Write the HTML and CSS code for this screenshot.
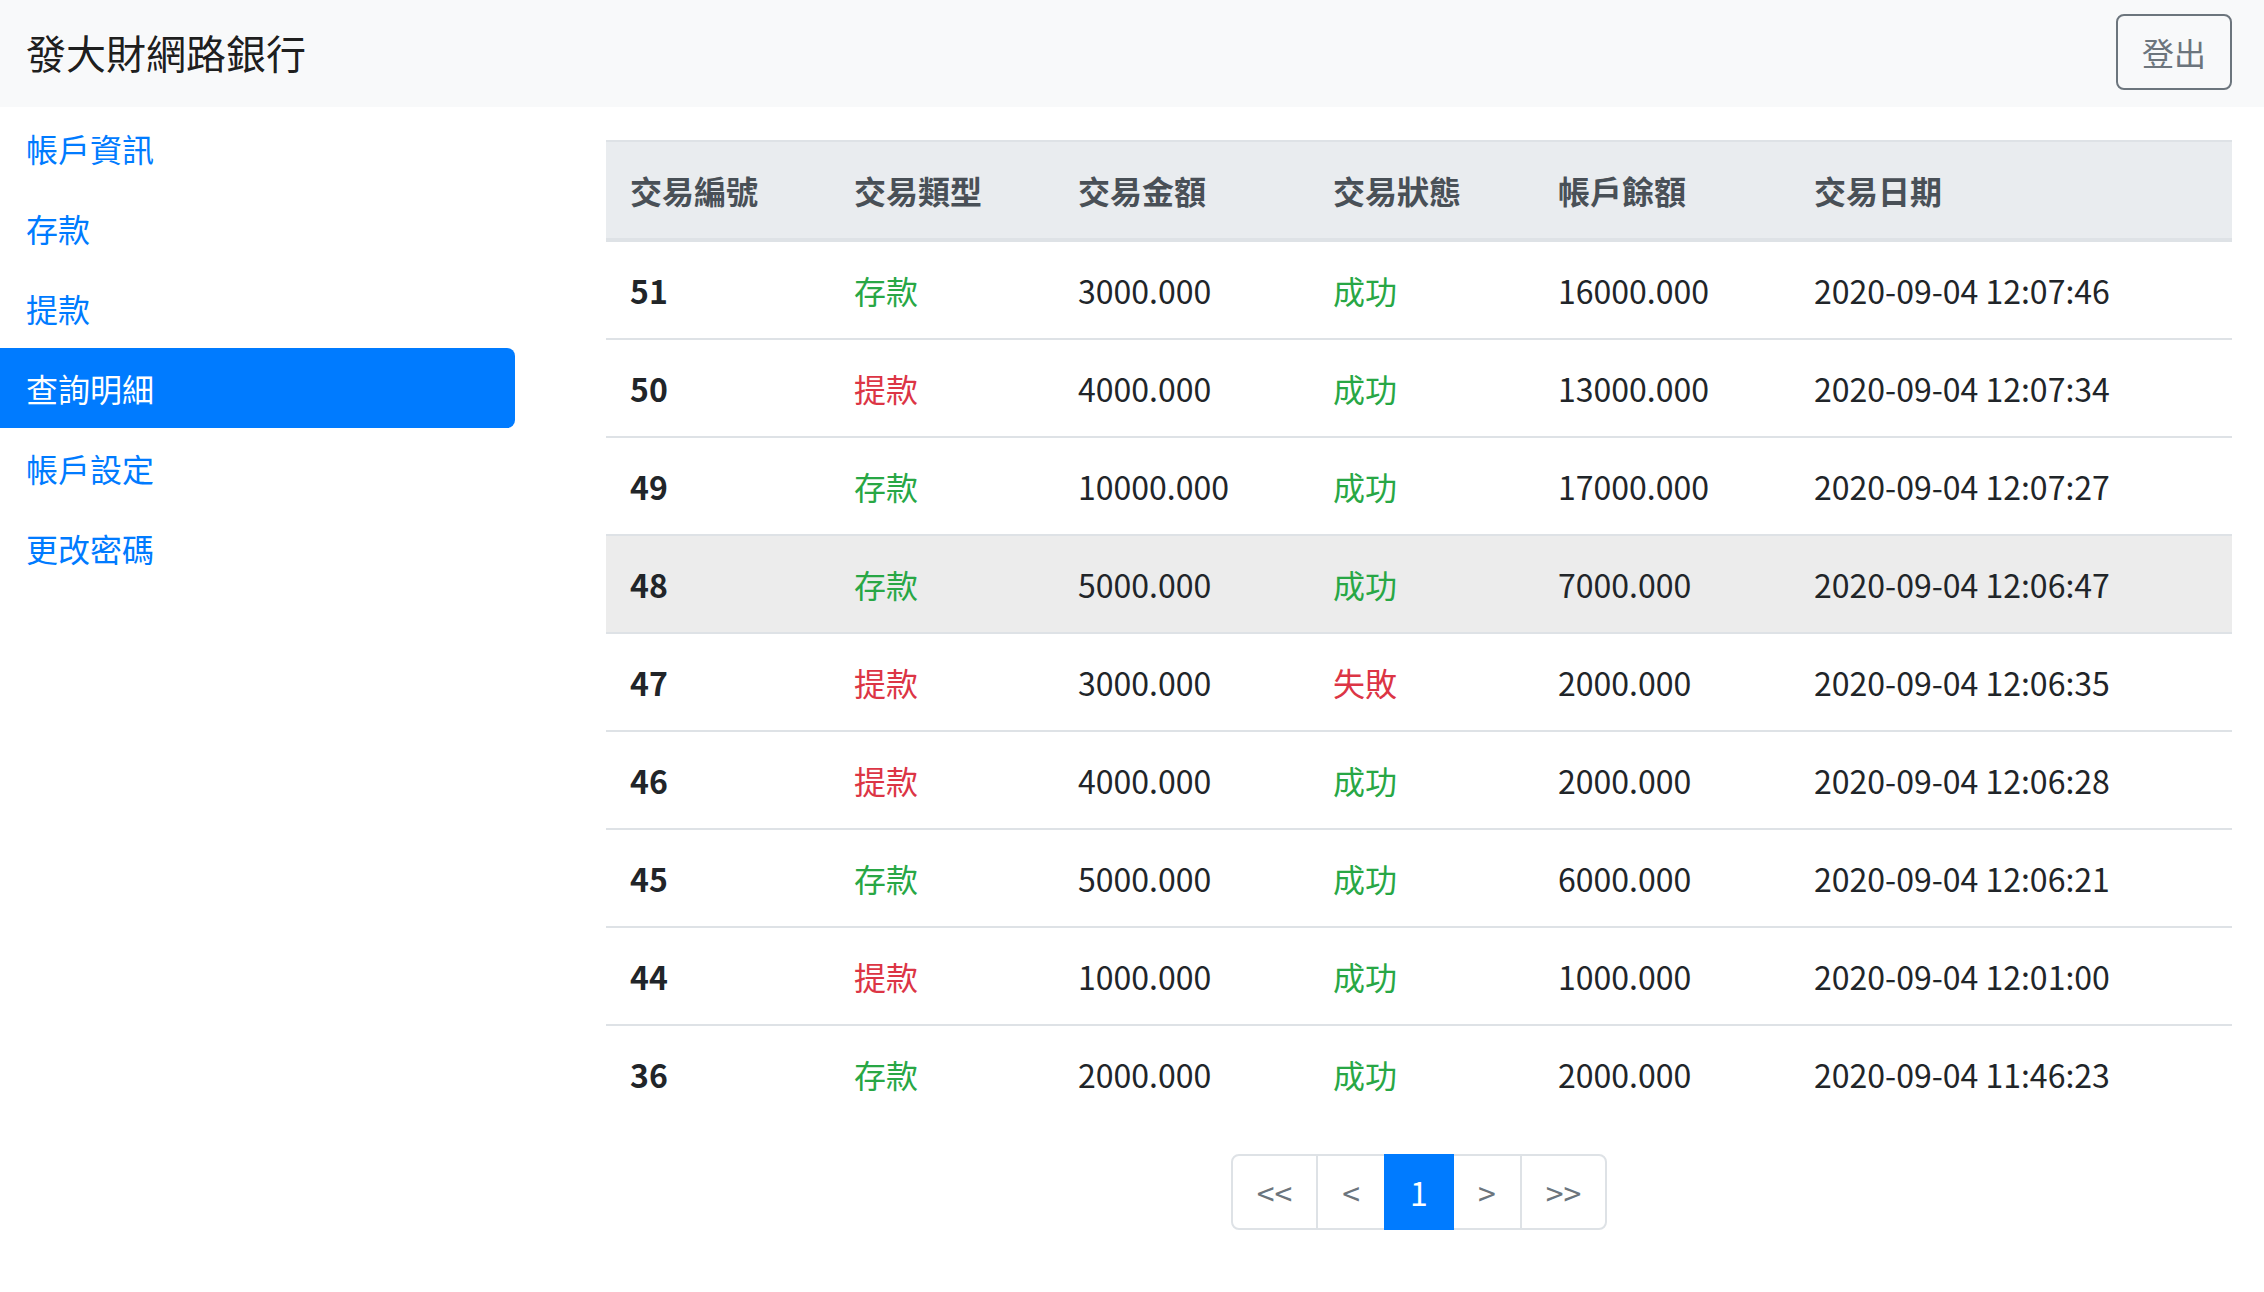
FILE: index.html
```html
<!DOCTYPE html>
<html lang="zh-Hant">
<head>
<meta charset="utf-8">
<title>發大財網路銀行</title>
<link rel="stylesheet" href="styles.css">
</head>
<body>
<header class="navbar">
  <span class="brand">發大財網路銀行</span>
  <button class="btn-logout" type="button">登出</button>
</header>
<div class="main">
  <nav class="sidebar">
    <ul class="nav">
      <li><a class="nav-link" href="#">帳戶資訊</a></li>
      <li><a class="nav-link" href="#">存款</a></li>
      <li><a class="nav-link" href="#">提款</a></li>
      <li><a class="nav-link active" href="#">查詢明細</a></li>
      <li><a class="nav-link" href="#">帳戶設定</a></li>
      <li><a class="nav-link" href="#">更改密碼</a></li>
    </ul>
  </nav>
  <section class="content">
    <table class="table">
      <colgroup>
        <col class="c1"><col class="c2"><col class="c3"><col class="c4"><col class="c5"><col class="c6">
      </colgroup>
      <thead>
        <tr><th>交易編號</th><th>交易類型</th><th>交易金額</th><th>交易狀態</th><th>帳戶餘額</th><th>交易日期</th></tr>
      </thead>
      <tbody>
        <tr><td class="id">51</td><td class="ok">存款</td><td>3000.000</td><td class="ok">成功</td><td>16000.000</td><td>2020-09-04 12:07:46</td></tr>
        <tr><td class="id">50</td><td class="bad">提款</td><td>4000.000</td><td class="ok">成功</td><td>13000.000</td><td>2020-09-04 12:07:34</td></tr>
        <tr><td class="id">49</td><td class="ok">存款</td><td>10000.000</td><td class="ok">成功</td><td>17000.000</td><td>2020-09-04 12:07:27</td></tr>
        <tr class="hover"><td class="id">48</td><td class="ok">存款</td><td>5000.000</td><td class="ok">成功</td><td>7000.000</td><td>2020-09-04 12:06:47</td></tr>
        <tr><td class="id">47</td><td class="bad">提款</td><td>3000.000</td><td class="bad">失敗</td><td>2000.000</td><td>2020-09-04 12:06:35</td></tr>
        <tr><td class="id">46</td><td class="bad">提款</td><td>4000.000</td><td class="ok">成功</td><td>2000.000</td><td>2020-09-04 12:06:28</td></tr>
        <tr><td class="id">45</td><td class="ok">存款</td><td>5000.000</td><td class="ok">成功</td><td>6000.000</td><td>2020-09-04 12:06:21</td></tr>
        <tr><td class="id">44</td><td class="bad">提款</td><td>1000.000</td><td class="ok">成功</td><td>1000.000</td><td>2020-09-04 12:01:00</td></tr>
        <tr><td class="id">36</td><td class="ok">存款</td><td>2000.000</td><td class="ok">成功</td><td>2000.000</td><td>2020-09-04 11:46:23</td></tr>
      </tbody>
    </table>
    <ul class="pagination">
      <li><a class="page-link" href="#">&lt;&lt;</a></li>
      <li><a class="page-link" href="#">&lt;</a></li>
      <li><a class="page-link active" href="#">1</a></li>
      <li><a class="page-link" href="#">&gt;</a></li>
      <li><a class="page-link" href="#">&gt;&gt;</a></li>
    </ul>
  </section>
</div>
</body>
</html>
```
FILE: styles.css
```css
* { box-sizing: border-box; }
html, body { margin: 0; padding: 0; }
body {
  font-family: "Noto Sans CJK TC", "Noto Sans", sans-serif;
  font-size: 32px;
  line-height: 1.5;
  color: #212529;
  background: #fff;
}
.navbar {
  height: 107px;
  background: #f8f9fa;
  display: flex;
  align-items: flex-start;
  justify-content: space-between;
  padding: 14px 32px 0 26px;
}
.brand {
  margin-top: 8px;
  font-size: 40px;
  line-height: 60px;
  color: rgba(0,0,0,.9);
}
.btn-logout {
  font-family: inherit;
  font-size: 32px;
  line-height: 48px;
  padding: 12px 24px;
  border: 2px solid #6c757d;
  border-radius: 8px;
  background: transparent;
  color: #6c757d;
}
.main {
  display: flex;
  align-items: flex-start;
}
.sidebar { width: 515px; flex: none; padding-top: 1px; }
.nav { list-style: none; margin: 0; padding: 0; }
.nav-link {
  display: block;
  padding: 16px 26px;
  color: #007bff;
  text-decoration: none;
  border-radius: 0 8px 8px 0;
}
.nav-link.active { background: #007bff; color: #fff; }
.content {
  flex: 1;
  padding: 33px 32px 40px 91px;
}
.table {
  width: 100%;
  border-collapse: collapse;
}
.c1 { width: 224px; }
.c2 { width: 224px; }
.c3 { width: 255px; }
.c4 { width: 225px; }
.c5 { width: 256px; }
.table th, .table td {
  padding: 24px;
  text-align: left;
  vertical-align: top;
  border-top: 2px solid #dee2e6;
}
.table th {
  background: #e9ecef;
  color: #495057;
  font-weight: 700;
  border-bottom: 4px solid #dee2e6;
}
.table td.id { font-weight: 700; }
.table td.ok { color: #28a745; }
.table td.bad { color: #dc3545; }
.table tr.hover td { background: rgba(0,0,0,.075); }
.pagination {
  list-style: none;
  margin: 32px 0 0;
  padding: 0;
  display: flex;
  justify-content: center;
}
.page-link {
  display: block;
  padding: 16px 24px;
  line-height: 40px;
  border: 2px solid #dee2e6;
  margin-left: -2px;
  color: #6c757d;
  text-decoration: none;
  background: #fff;
}
.pagination li:first-child .page-link { margin-left: 0; border-radius: 8px 0 0 8px; }
.pagination li:last-child .page-link { border-radius: 0 8px 8px 0; }
.page-link.active { background: #007bff; border-color: #007bff; color: #fff; position: relative; z-index: 1; }
```
